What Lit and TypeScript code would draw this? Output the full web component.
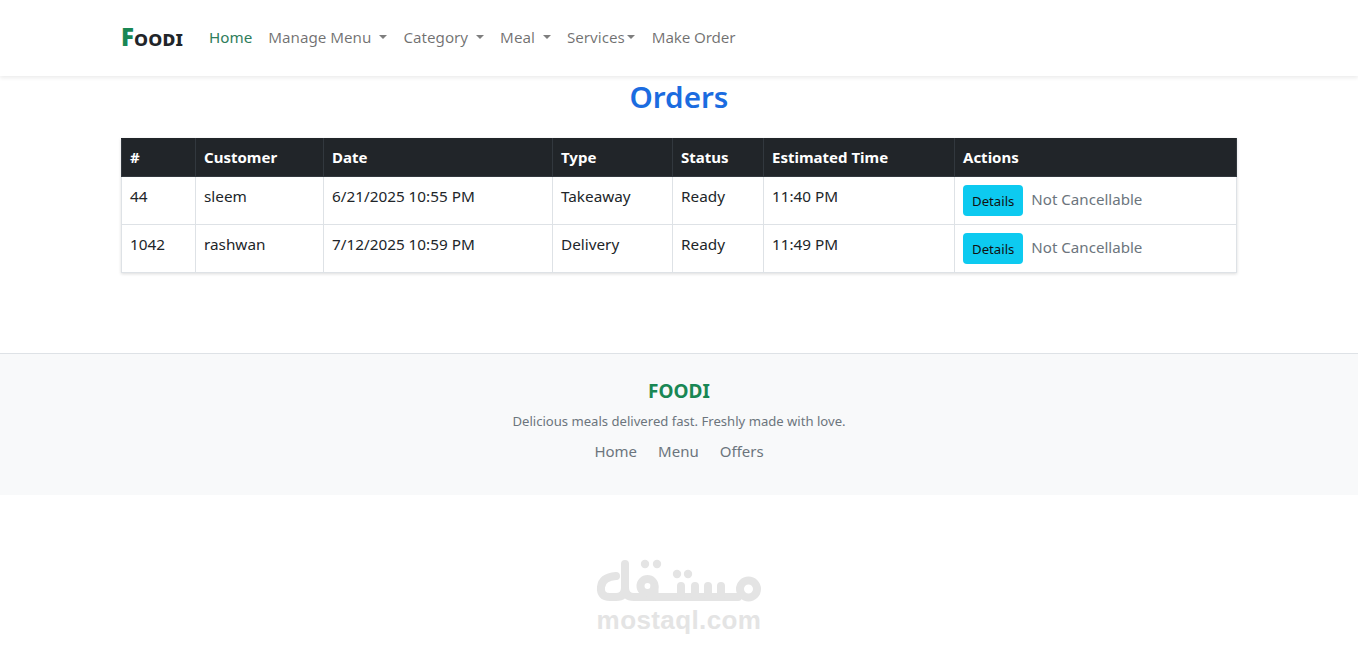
import { LitElement, html, css } from "lit";
import { customElement } from "lit/decorators.js";

const FONT = `"Noto Sans", "Open Sans", "Liberation Sans", sans-serif`;

@customElement("app-root")
export class AppRoot extends LitElement {
  static styles = css`
    :host { display: block; min-height: 648px; background: #fff; color: #212529; font-family: ${css([FONT] as any)}; font-size: 15px; line-height: 24px; }
    * { box-sizing: border-box; }
    .nav { height: 76px; background: #fff; box-shadow: 0 2px 4px rgba(0,0,0,.08); position: relative; }
    .container { width: 1116px; margin: 0 auto; }
    .nav .container { display: flex; align-items: center; height: 76px; padding-bottom: 2px; }
    .brand { font-weight: 700; font-size: 21px; letter-spacing: .2px; color: #212529; margin-right: 16px; width: 64px; white-space: nowrap; font-variant: small-caps; }
    .brand b { color: #198754; font-size: 24px; font-variant: normal; letter-spacing: 0; }
    .links { display: flex; font-size: 15.2px; }
    .links a { padding: 0 8px; color: rgba(0,0,0,.56); white-space: nowrap; display: flex; align-items: center; }
    .links a.active { color: #2f7d5b; }
    .links a.last { padding-left: 7px; letter-spacing: -.15px; }
    .caret { display: inline-block; border-top: 4.8px solid; border-left: 4.8px solid transparent; border-right: 4.8px solid transparent; margin-left: 8px; opacity: .9; }
    .caret.tight { margin-left: 2px; margin-right: 2px; }
    h1 { margin: 0; font-size: 29.6px; font-weight: 600; line-height: 41px; height: 62px; color: #1b6ce0; text-align: center; }
    .wrap { box-shadow: 0 1px 3px rgba(0,0,0,.14); }
    table { width: 1115px; table-layout: fixed; border-collapse: collapse; font-size: 15.3px; }
    th { background: #212529; color: #fff; font-weight: 700; text-align: left; padding: 5px 8px 7px; line-height: 24px; height: 38px; border: 1px solid #32383e; border-top-color: #212529; font-size: 15px; }
    td { padding: 8px 8px 6px; height: 48px; vertical-align: top; border: 1px solid #dee2e6; line-height: 22px; }
    .c1 { width: 74px; } .c2 { width: 128px; } .c3 { width: 229px; } .c4 { width: 120px; } .c5 { width: 91px; } .c6 { width: 191px; } .c7 { width: 282px; }
    .btn { display: inline-block; background: #0dcaf0; color: #111; font-size: 13.2px; line-height: 21px; padding: 6px 9px 4px; height: 31px; border-radius: 4px; vertical-align: top; }
    .muted { color: #6c757d; margin-left: 4px; display: inline-block; line-height: 29px; font-size: 15.1px; }
    footer { margin-top: 80px; height: 142px; background: #f8f9fa; border-top: 1px solid #dee2e6; text-align: center; padding-top: 24px; }
    footer h5 { margin: 0; font-size: 19px; font-weight: 700; color: #198754; line-height: 27px; }
    footer p { margin: 6px 0 0; font-size: 13.1px; color: #6c757d; line-height: 20px; }
    .flinks { display: flex; justify-content: center; gap: 21px; margin-top: 8px; color: #6c757d; font-size: 15px; }
    .mark { display: flex; flex-direction: column; align-items: center; padding-top: 62px; color: #e4e4e4; }
    .mark svg { display: block; }
    .mark span { font-family: "Liberation Sans", sans-serif; font-weight: 700; font-size: 26px; line-height: 30px; letter-spacing: .4px; margin-top: 1px; }
  `;

  render() {
    const rows = [
      ["44", "sleem", "6/21/2025 10:55 PM", "Takeaway", "Ready", "11:40 PM"],
      ["1042", "rashwan", "7/12/2025 10:59 PM", "Delivery", "Ready", "11:49 PM"],
    ];
    return html`
      <nav class="nav"><div class="container">
        <div class="brand"><b>F</b>oodi</div>
        <div class="links">
          <a class="active">Home</a>
          <a>Manage Menu <i class="caret"></i></a>
          <a>Category <i class="caret"></i></a>
          <a>Meal <i class="caret"></i></a>
          <a>Services<i class="caret tight"></i></a>
          <a class="last">Make Order</a>
        </div>
      </div></nav>
      <main class="container">
        <h1>Orders</h1>
        <div class="wrap">
          <table>
            <colgroup><col class="c1"/><col class="c2"/><col class="c3"/><col class="c4"/><col class="c5"/><col class="c6"/><col class="c7"/></colgroup>
            <thead><tr><th>#</th><th>Customer</th><th>Date</th><th>Type</th><th>Status</th><th>Estimated Time</th><th>Actions</th></tr></thead>
            <tbody>
              ${rows.map(r => html`<tr>${r.map(c => html`<td>${c}</td>`)}<td><span class="btn">Details</span> <span class="muted">Not Cancellable</span></td></tr>`)}
            </tbody>
          </table>
        </div>
      </main>
      <footer>
        <h5>FOODI</h5>
        <p>Delicious meals delivered fast. Freshly made with love.</p>
        <div class="flinks"><span>Home</span><span>Menu</span><span>Offers</span></div>
      </footer>
      <div class="mark">
        <svg width="166" height="47" viewBox="596 558 166 47" fill="none" stroke="currentColor" stroke-width="8" stroke-linecap="round" stroke-linejoin="round" role="img" aria-label="Mostaql logo">
          <path d="M625 565V589Q625 598 634 598H738"/>
          <path d="M625 589Q625 598 616 598H610Q600 598 601 588Q602 578 616 577"/>
          <circle cx="647.5" cy="587" r="7"/>
          <path d="M654.5 588V598"/>
          <path d="M681 587V598M695 587V598M708 587V598M721 587V598"/>
          <circle cx="748.5" cy="590" r="8.5"/>
          <g fill="currentColor" stroke="none">
            <circle cx="645" cy="565" r="4.2"/><circle cx="657" cy="565" r="4.2"/>
            <circle cx="677" cy="575" r="4.2"/><circle cx="688" cy="575" r="4.2"/>
          </g>
        </svg>
        <span>mostaql.com</span>
      </div>
    `;
  }
}
